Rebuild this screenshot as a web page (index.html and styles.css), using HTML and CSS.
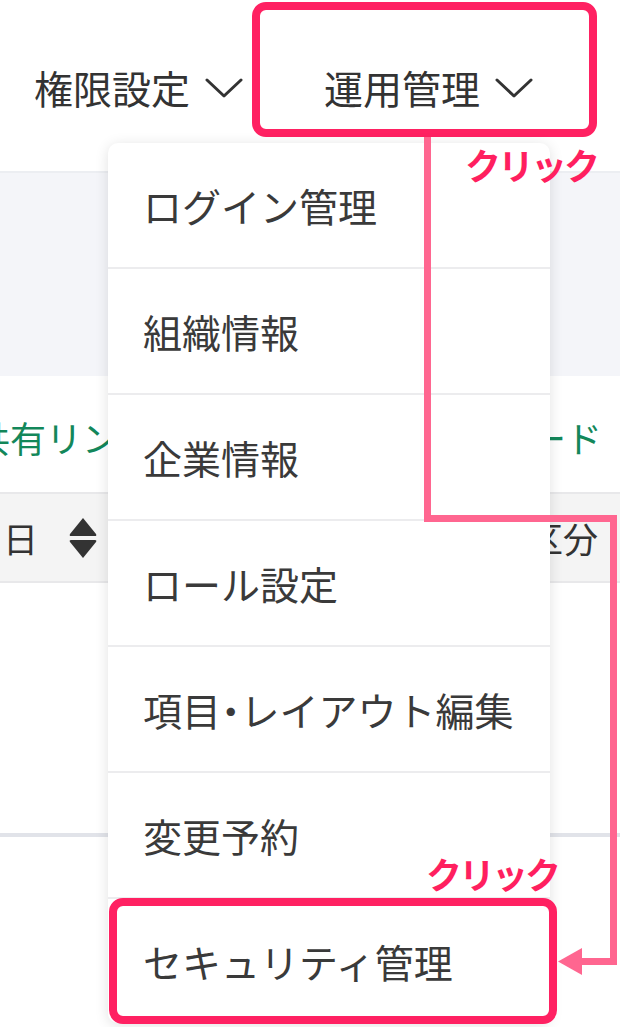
FILE: index.html
```html
<!DOCTYPE html>
<html lang="ja">
<head>
<meta charset="utf-8">
<title>運用管理メニュー</title>
<link rel="stylesheet" href="styles.css">
</head>
<body>
<div class="page">
  <header class="topbar">
    <nav class="nav">
      <div class="nav-item">
        <span>権限設定</span>
        <svg class="chev" width="38" height="20" viewBox="0 0 38 20"><polyline points="2,2 19,18 36,2" fill="none" stroke="#333" stroke-width="3" stroke-linecap="round" stroke-linejoin="round"/></svg>
      </div>
      <div class="nav-item nav-item-active">
        <span>運用管理</span>
        <svg class="chev" width="38" height="20" viewBox="0 0 38 20"><polyline points="2,2 19,18 36,2" fill="none" stroke="#333" stroke-width="3" stroke-linecap="round" stroke-linejoin="round"/></svg>
      </div>
    </nav>
  </header>

  <section class="band"></section>

  <div class="toolbar">
    <a class="link link-left">共有リンク</a>
    <a class="link link-right">ダウンロード</a>
  </div>

  <div class="thead">
    <div class="th">
      <span>日</span>
      <svg class="sort" width="30" height="42" viewBox="0 0 30 42"><path d="M15 1 L28 17 Q29 19 27 19 L3 19 Q1 19 2 17 Z" fill="#333"/><path d="M15 41 L28 25 Q29 23 27 23 L3 23 Q1 23 2 25 Z" fill="#333"/></svg>
    </div>
    <div class="th th-right">区分</div>
  </div>

  <div class="tbody"></div>

  <ul class="menu">
    <li class="menu-item">ログイン管理</li>
    <li class="menu-item">組織情報</li>
    <li class="menu-item">企業情報</li>
    <li class="menu-item">ロール設定</li>
    <li class="menu-item">項目<span class="dot">・</span>レイアウト編集</li>
    <li class="menu-item">変更予約</li>
    <li class="menu-item">セキュリティ管理</li>
  </ul>

  <svg class="connector" width="620" height="1027" viewBox="0 0 620 1027">
    <rect x="424" y="137" width="7" height="385" fill="#ff6690"/>
    <rect x="424" y="515" width="193" height="7" fill="#ff6690"/>
    <rect x="610" y="515" width="7" height="450" fill="#ff6690"/>
    <rect x="578" y="958" width="39" height="7" fill="#ff6690"/>
    <polygon points="558,961.5 582,948 582,975" fill="#ff6690"/>
  </svg>

  <div class="mark-box"></div>
  <div class="click-label click-top">クリック</div>
  <div class="click-label click-bottom">クリック</div>
</div>
</body>
</html>
```

FILE: styles.css
```css
html, body {
  margin: 0;
  padding: 0;
  background: #ffffff;
}

body {
  font-family: "Noto Sans CJK JP", "Noto Sans", sans-serif;
  color: #333333;
}

.page {
  position: relative;
  width: 620px;
  height: 1027px;
  overflow: hidden;
  background: #ffffff;
}

.topbar {
  height: 173px;
  box-sizing: border-box;
  border-bottom: 2px solid #eceef2;
}

.nav {
  display: flex;
  gap: 9px;
  padding: 2px 0 0 34px;
}

.nav-item {
  display: flex;
  align-items: center;
  gap: 15px;
  height: 135px;
  box-sizing: border-box;
  padding-top: 36px;
  font-size: 39px;
  line-height: 1.2;
  color: #333;
}

.nav-item-active {
  width: 345px;
  border: 8px solid #ff2162;
  border-radius: 14px;
  padding-left: 64px;
}

.band {
  height: 203px;
  background: #f4f5f9;
}

.toolbar {
  height: 116px;
  box-sizing: border-box;
  padding-top: 8px;
  display: flex;
  justify-content: space-between;
  align-items: center;
}

.link {
  font-size: 36px;
  line-height: 1.2;
  color: #13875a;
  white-space: nowrap;
}

.link-left {
  margin-left: -26px;
}

.link-right {
  margin-right: 18px;
}

.thead {
  height: 91px;
  box-sizing: border-box;
  border-top: 2px solid #e8e8ea;
  border-bottom: 2px solid #e8e8ea;
  background: #f4f4f4;
  display: flex;
  justify-content: space-between;
  align-items: center;
}

.th {
  display: flex;
  align-items: center;
  gap: 30px;
  font-size: 35px;
  line-height: 1.2;
  color: #333;
  padding-left: 3px;
}

.th-right {
  padding: 0 22px 0 0;
}

.tbody {
  height: 250px;
  border-bottom: 4px solid #e1e3e9;
}

.menu {
  position: absolute;
  left: 108px;
  top: 143px;
  width: 442px;
  margin: 0;
  padding: 0;
  list-style: none;
  background: #ffffff;
  border-radius: 10px;
  box-shadow: 0 2px 14px rgba(0, 0, 0, 0.12);
}

.menu-item {
  height: 124px;
  display: flex;
  align-items: center;
  padding-left: 35px;
  font-size: 39px;
  color: #3a3a3a;
  border-bottom: 2px solid #ececee;
  white-space: nowrap;
}

.menu-item:last-child {
  border-bottom: none;
}

.dot {
  font-feature-settings: "halt" 1;
}

.connector {
  position: absolute;
  left: 0;
  top: 0;
  pointer-events: none;
}

.mark-box {
  position: absolute;
  left: 109px;
  top: 898px;
  width: 448px;
  height: 126px;
  box-sizing: border-box;
  border: 8px solid #ff2162;
  border-radius: 14px;
}

.click-label {
  position: absolute;
  font-size: 36px;
  font-weight: 700;
  line-height: 1;
  color: #ff1f5f;
  letter-spacing: -3px;
  white-space: nowrap;
}

.click-top {
  left: 465px;
  top: 146px;
}

.click-bottom {
  left: 426px;
  top: 855px;
}
```
